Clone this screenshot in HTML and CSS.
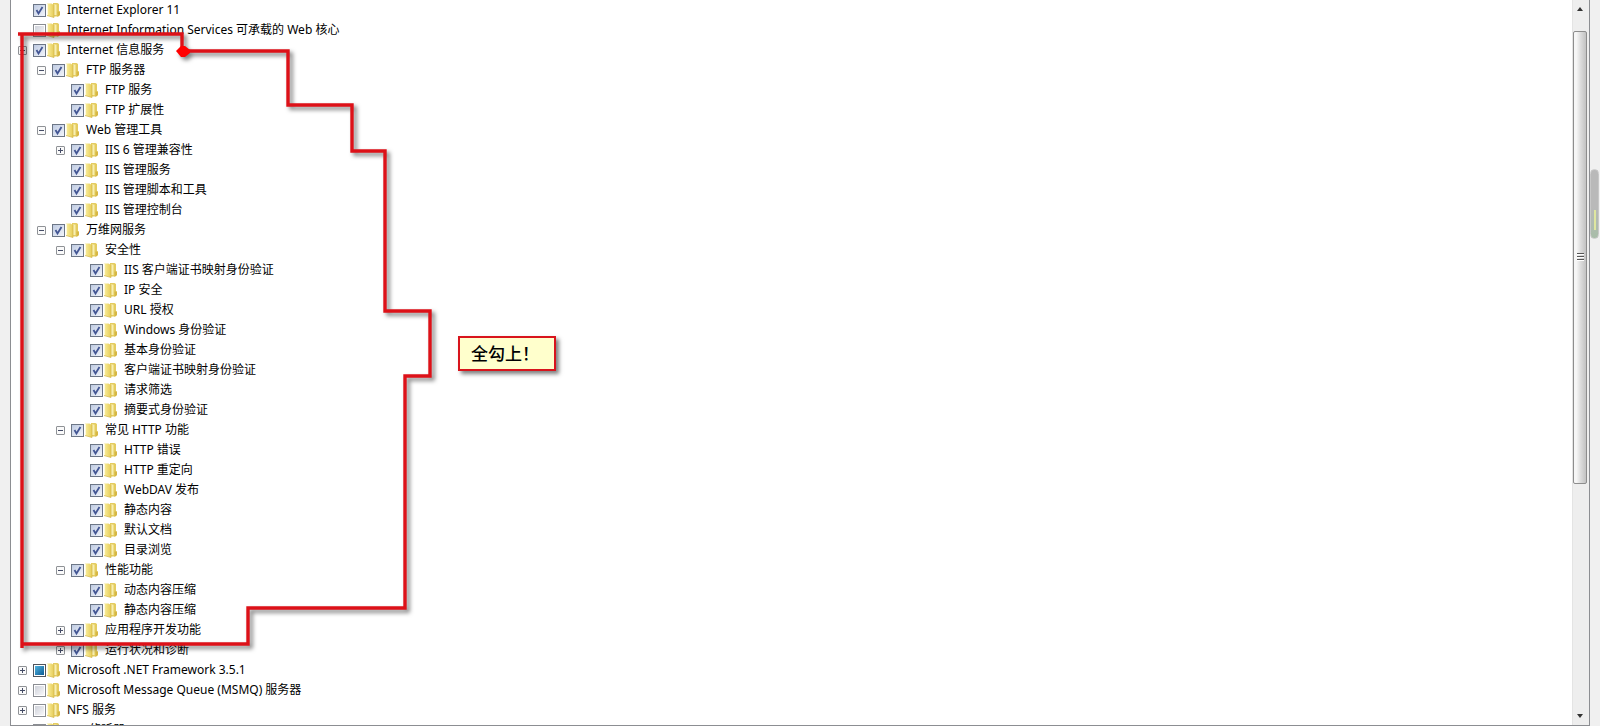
FILE: index.html
```
<!DOCTYPE html>
<html lang="zh-CN">
<head>
    <meta charset="UTF-8">
    <meta name="viewport" content="width=device-width, initial-scale=1.0">
    <title>Windows 功能</title>
    <link rel="stylesheet" href="styles.css">
</head>
<body>
    <svg class="defs" aria-hidden="true">
        <defs>
            <linearGradient id="gold" x1="0" y1="0" x2="1" y2="0">
                <stop offset="0" stop-color="#fbf0a0"/>
                <stop offset="1" stop-color="#e6cc58"/>
            </linearGradient>
            <symbol id="folder" viewBox="0 0 14 16">
                <path d="M6 1h4.500l1.500 1v7l1 1v3l-2 1.500H6z" fill="#e4cc60"/>
                <path d="M7 2.500h2.500v10.500H7z" fill="#f8efb0"/>
                <path d="M10.500 9.500H13v3.500l-2.500 2z" fill="#d6b744"/>
                <path d="M0 1.500h4.500L7 3v12.500L0 13.500z" fill="url(#gold)"/>
                <path d="M.5 2v11" stroke="#fffbdc" fill="none"/>
                <path d="M0 13.500l7 2V3" stroke="#d2b648" stroke-width=".7" fill="none"/>
            </symbol>
        </defs>
    </svg>
    <div class="window">
        <div class="panel">
            <ul class="tree">
                <li><div class="row leaf"><label><input type="checkbox" checked><svg><use href="#folder"/></svg>Internet Explorer 11</label></div></li>
                <li><div class="row leaf"><label><input type="checkbox"><svg><use href="#folder"/></svg>Internet Information Services 可承载的 Web 核心</label></div></li>
                <li>
                    <div class="row"><button class="toggle" aria-label="折叠"></button><label><input type="checkbox" checked><svg><use href="#folder"/></svg>Internet 信息服务</label></div>
                    <ul>
                        <li>
                            <div class="row"><button class="toggle" aria-label="折叠"></button><label><input type="checkbox" checked><svg><use href="#folder"/></svg>FTP 服务器</label></div>
                            <ul>
                                <li><div class="row leaf"><label><input type="checkbox" checked><svg><use href="#folder"/></svg>FTP 服务</label></div></li>
                                <li><div class="row leaf"><label><input type="checkbox" checked><svg><use href="#folder"/></svg>FTP 扩展性</label></div></li>
                            </ul>
                        </li>
                        <li>
                            <div class="row"><button class="toggle" aria-label="折叠"></button><label><input type="checkbox" checked><svg><use href="#folder"/></svg>Web 管理工具</label></div>
                            <ul>
                                <li><div class="row"><button class="toggle plus" aria-label="展开"></button><label><input type="checkbox" checked><svg><use href="#folder"/></svg>IIS 6 管理兼容性</label></div></li>
                                <li><div class="row leaf"><label><input type="checkbox" checked><svg><use href="#folder"/></svg>IIS 管理服务</label></div></li>
                                <li><div class="row leaf"><label><input type="checkbox" checked><svg><use href="#folder"/></svg>IIS 管理脚本和工具</label></div></li>
                                <li><div class="row leaf"><label><input type="checkbox" checked><svg><use href="#folder"/></svg>IIS 管理控制台</label></div></li>
                            </ul>
                        </li>
                        <li>
                            <div class="row"><button class="toggle" aria-label="折叠"></button><label><input type="checkbox" checked><svg><use href="#folder"/></svg>万维网服务</label></div>
                            <ul>
                                <li>
                                    <div class="row"><button class="toggle" aria-label="折叠"></button><label><input type="checkbox" checked><svg><use href="#folder"/></svg>安全性</label></div>
                                    <ul>
                                        <li><div class="row leaf"><label><input type="checkbox" checked><svg><use href="#folder"/></svg>IIS 客户端证书映射身份验证</label></div></li>
                                        <li><div class="row leaf"><label><input type="checkbox" checked><svg><use href="#folder"/></svg>IP 安全</label></div></li>
                                        <li><div class="row leaf"><label><input type="checkbox" checked><svg><use href="#folder"/></svg>URL 授权</label></div></li>
                                        <li><div class="row leaf"><label><input type="checkbox" checked><svg><use href="#folder"/></svg>Windows 身份验证</label></div></li>
                                        <li><div class="row leaf"><label><input type="checkbox" checked><svg><use href="#folder"/></svg>基本身份验证</label></div></li>
                                        <li><div class="row leaf"><label><input type="checkbox" checked><svg><use href="#folder"/></svg>客户端证书映射身份验证</label></div></li>
                                        <li><div class="row leaf"><label><input type="checkbox" checked><svg><use href="#folder"/></svg>请求筛选</label></div></li>
                                        <li><div class="row leaf"><label><input type="checkbox" checked><svg><use href="#folder"/></svg>摘要式身份验证</label></div></li>
                                    </ul>
                                </li>
                                <li>
                                    <div class="row"><button class="toggle" aria-label="折叠"></button><label><input type="checkbox" checked><svg><use href="#folder"/></svg>常见 HTTP 功能</label></div>
                                    <ul>
                                        <li><div class="row leaf"><label><input type="checkbox" checked><svg><use href="#folder"/></svg>HTTP 错误</label></div></li>
                                        <li><div class="row leaf"><label><input type="checkbox" checked><svg><use href="#folder"/></svg>HTTP 重定向</label></div></li>
                                        <li><div class="row leaf"><label><input type="checkbox" checked><svg><use href="#folder"/></svg>WebDAV 发布</label></div></li>
                                        <li><div class="row leaf"><label><input type="checkbox" checked><svg><use href="#folder"/></svg>静态内容</label></div></li>
                                        <li><div class="row leaf"><label><input type="checkbox" checked><svg><use href="#folder"/></svg>默认文档</label></div></li>
                                        <li><div class="row leaf"><label><input type="checkbox" checked><svg><use href="#folder"/></svg>目录浏览</label></div></li>
                                    </ul>
                                </li>
                                <li>
                                    <div class="row"><button class="toggle" aria-label="折叠"></button><label><input type="checkbox" checked><svg><use href="#folder"/></svg>性能功能</label></div>
                                    <ul>
                                        <li><div class="row leaf"><label><input type="checkbox" checked><svg><use href="#folder"/></svg>动态内容压缩</label></div></li>
                                        <li><div class="row leaf"><label><input type="checkbox" checked><svg><use href="#folder"/></svg>静态内容压缩</label></div></li>
                                    </ul>
                                </li>
                                <li><div class="row"><button class="toggle plus" aria-label="展开"></button><label><input type="checkbox" checked><svg><use href="#folder"/></svg>应用程序开发功能</label></div></li>
                                <li><div class="row"><button class="toggle plus" aria-label="展开"></button><label><input type="checkbox" checked><svg><use href="#folder"/></svg>运行状况和诊断</label></div></li>
                            </ul>
                        </li>
                    </ul>
                </li>
                <li><div class="row"><button class="toggle plus" aria-label="展开"></button><label><input type="checkbox" class="partial"><svg><use href="#folder"/></svg>Microsoft .NET Framework 3.5.1</label></div></li>
                <li><div class="row"><button class="toggle plus" aria-label="展开"></button><label><input type="checkbox"><svg><use href="#folder"/></svg>Microsoft Message Queue (MSMQ) 服务器</label></div></li>
                <li><div class="row"><button class="toggle plus" aria-label="展开"></button><label><input type="checkbox"><svg><use href="#folder"/></svg>NFS 服务</label></div></li>
                <li><div class="row leaf"><label><input type="checkbox"><svg><use href="#folder"/></svg>RIP 侦听器</label></div></li>
            </ul>
            <div class="scrollbar">
                <button class="arrow up" aria-label="向上"></button>
                <div class="track"><div class="thumb"><i></i><i></i><i></i></div></div>
                <button class="arrow down" aria-label="向下"></button>
            </div>
        </div>
        <div class="side"><div class="meter"><span></span></div></div>
    </div>

    <!-- red outline round the features to tick -->
    <svg class="outline" width="450" height="660" aria-hidden="true">
        <path d="M18 34H182V51H288V105H352V151H385V311H430V376H405V608H248V644H22V34M22 640V648" fill="none" stroke="#dd1118" stroke-width="3.400"/>
        <path d="M176 51l5-5h4l5 4v3l-5 4h-4z" fill="#f00"/>
    </svg>
    <div class="note">全勾上！</div>
</body>
</html>
```
FILE: styles.css
```
* { box-sizing: border-box; }
body { margin: 0; background: #f0f0f0; color: #000; font-family: "Noto Sans", "Noto Sans CJK SC", sans-serif; font-size: 12px; line-height: 20px; overflow: hidden; }
.defs { position: absolute; width: 0; height: 0; }

.window { display: flex; height: 100vh; padding-left: 10px; }
.panel { flex: 1; display: flex; background: #fff; border: 1px solid #8c8e92; border-top: none; overflow: hidden; }

/* feature tree */
.tree { flex: 1; padding-left: 7px; }
ul { list-style: none; margin: 0; padding: 0; }
ul ul { padding-left: 19px; }
.row { display: flex; align-items: center; height: 20px; }
.leaf { padding-left: 15px; }
label { display: flex; align-items: center; white-space: nowrap; }
label svg { width: 14px; height: 16px; margin-right: 6px; }
input { appearance: none; width: 13px; height: 13px; margin: 0 1px 0 0; border: 1px solid #8a8d92; background: linear-gradient(135deg, #cfd2da, #f7f7f9) content-box #f4f4f4; padding: 1px; }
input:checked { border-color: #6c7686; background: url("data:image/svg+xml,%3Csvg xmlns='http://www.w3.org/2000/svg' viewBox='0 0 13 13'%3E%3Cpath d='M3.500 6l2 3.500L9.500 3' fill='none' stroke='%23435694' stroke-width='1.800'/%3E%3C/svg%3E") border-box, linear-gradient(135deg, #bfcbe2, #f2f5fb); }
.partial { border-color: #50545c; background: linear-gradient(135deg, #52b4e0, #0c5c94) content-box #e4f0f8; }
.toggle { position: relative; width: 9px; height: 9px; margin: 0 6px 0 0; padding: 0; border: 1px solid #8f9296; border-radius: 1px; background: #fafafa; }
.toggle::before { content: ""; position: absolute; left: 1px; top: 3px; width: 5px; height: 1px; background: #454c66; }
.plus::after { content: ""; position: absolute; left: 3px; top: 1px; width: 1px; height: 5px; background: #454c66; }

/* scrollbar */
.scrollbar { display: flex; flex-direction: column; width: 17px; padding-right: 2px; background: #eee; border-left: 1px solid #e4e4e4; }
.arrow { height: 18px; padding: 0; border: none; background: none; display: flex; align-items: center; justify-content: center; }
.arrow::before { content: ""; border: 3px solid transparent; }
.up::before { border-bottom: 4px solid #333; border-top: none; }
.down::before { border-top: 4px solid #333; border-bottom: none; }
.track { flex: 1; padding-top: 13px; }
.thumb { height: 67%; display: flex; flex-direction: column; align-items: center; justify-content: center; gap: 1px; border: 1px solid #8d8d8d; border-radius: 2px; background: linear-gradient(90deg, #f6f6f6 20%, #dcdcdc 55%, #c2c2c2); }
.thumb i { width: 7px; height: 2px; border-top: 1px solid #555; background: #fff; }

.side { width: 10px; padding: 169px 1px 0 0; }
.meter { height: 70px; padding: 40px 3px 10px; border-radius: 5px; background: linear-gradient(#b9b9b9 55%, #a8bda8); border: 1px solid #c8c8c8; }
.meter span { display: block; width: 2px; height: 20px; background: #dfe6a0; }

.outline { position: absolute; left: 0; top: 0; pointer-events: none; filter: drop-shadow(3px 3px 2px rgba(0, 0, 0, .5)); }
.note { position: absolute; left: 458px; top: 336px; width: 98px; height: 35px; padding-left: 11px; border: 2px solid #d8141c; background: #ffffcc; box-shadow: 3px 3px 4px rgba(0, 0, 0, .5); font-size: 17px; font-weight: 500; line-height: 31px; }
```
